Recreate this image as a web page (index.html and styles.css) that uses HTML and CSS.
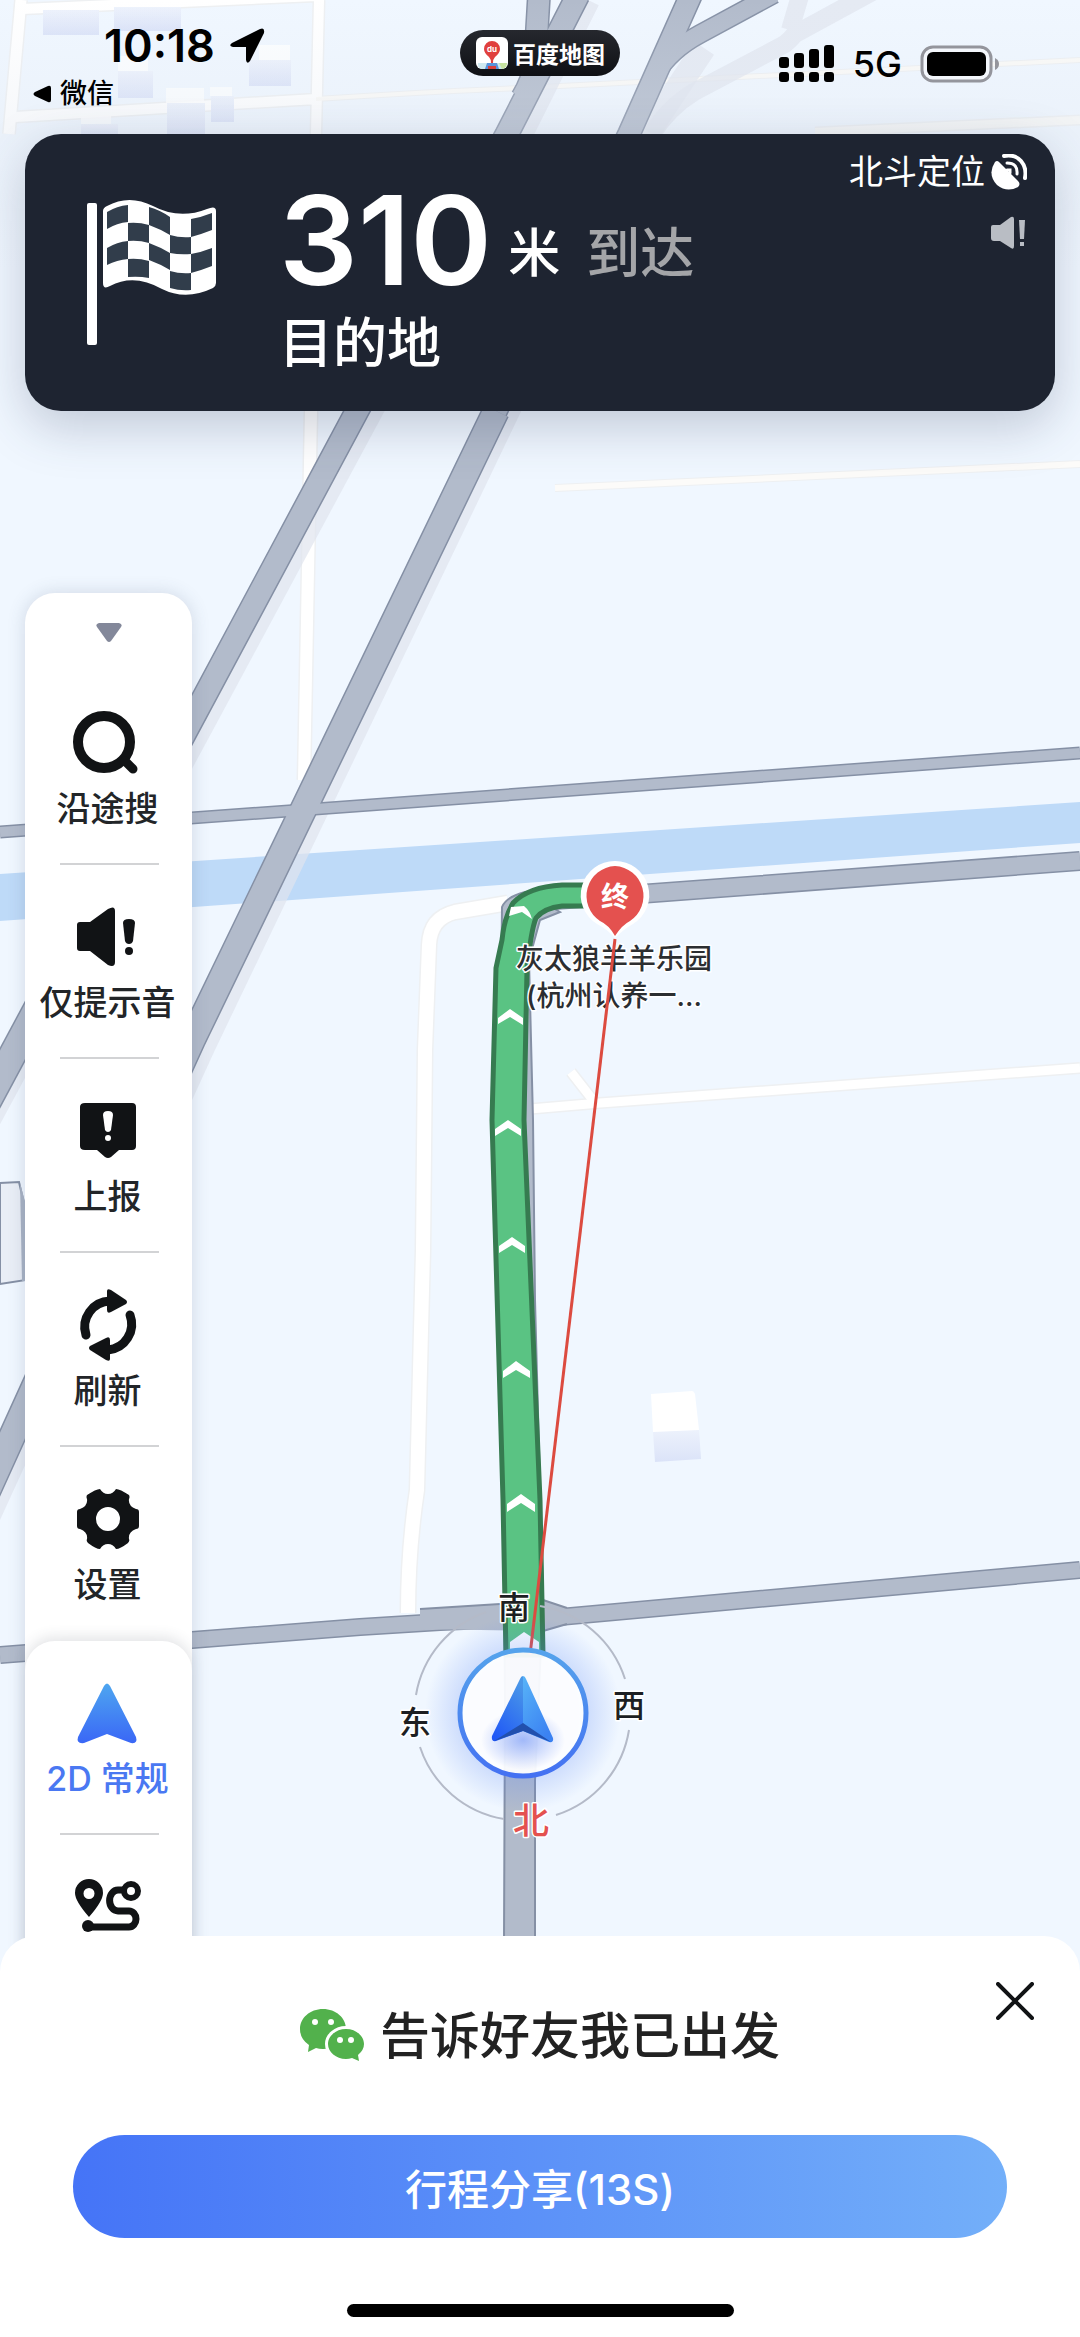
FILE: index.html
```html
<!DOCTYPE html>
<html lang="zh-CN">
<head>
    <meta charset="UTF-8">
    <meta name="viewport" content="width=device-width, initial-scale=1.0">
    <title>百度地图</title>
    <link rel="stylesheet" href="styles.css">
</head>
<body>
    <div class="screen">
        <svg class="map" viewBox="0 0 1080 2337" preserveAspectRatio="xMidYMin slice">
            <defs>
                <linearGradient id="haze" x1="0" y1="0" x2="0" y2="1">
                    <stop offset="0" stop-color="#dfe6f0" stop-opacity="0"/>
                    <stop offset="0.5" stop-color="#dfe6f0" stop-opacity="0.3"/>
                    <stop offset="1" stop-color="#dfe6f0" stop-opacity="0"/>
                </linearGradient>
                <linearGradient id="wall" x1="0" y1="0" x2="0" y2="1">
                    <stop offset="0" stop-color="#edf2fc"/>
                    <stop offset="1" stop-color="#dbe3f8"/>
                </linearGradient>
                <linearGradient id="ring" x1="0" y1="0" x2="0" y2="1">
                    <stop offset="0" stop-color="#55a3ec"/>
                    <stop offset="1" stop-color="#4471f2"/>
                </linearGradient>
                <linearGradient id="arrow-left" x1="0.7" y1="0" x2="0.2" y2="1">
                    <stop offset="0" stop-color="#4a97e8"/>
                    <stop offset="1" stop-color="#1f57f6"/>
                </linearGradient>
                <linearGradient id="arrow-right" x1="0" y1="0" x2="0.6" y2="1">
                    <stop offset="0" stop-color="#58b4f8"/>
                    <stop offset="1" stop-color="#3b82f2"/>
                </linearGradient>
                <radialGradient id="glow">
                    <stop offset="0.55" stop-color="#5b86f5" stop-opacity="0.3"/>
                    <stop offset="1" stop-color="#5b86f5" stop-opacity="0"/>
                </radialGradient>
                <radialGradient id="arrow-glow">
                    <stop offset="0" stop-color="#4a78f5" stop-opacity="0.5"/>
                    <stop offset="1" stop-color="#4a78f5" stop-opacity="0"/>
                </radialGradient>
            </defs>

            <rect width="1080" height="2337" fill="#f0f7ff"/>

            <!-- small white streets -->
            <g fill="none" stroke="#eef0f2" stroke-linejoin="round">
                <path d="M21 0L9 134" stroke-width="14"/>
                <path d="M22 9L316 -4M15 117L316 99M319 0L316 134" stroke-width="13"/>
                <path d="M316 99Q420 92 520 88L1080 60" stroke-width="6"/>
                <path d="M815 132L1080 120" stroke-width="11"/>
                <path d="M311 411L304 780" stroke-width="15"/>
                <path d="M555 488L1080 464" stroke-width="8"/>
                <path d="M508 903L455 912Q430 918 429 945L425 1050L423 1250L417 1490Q408 1550 408 1613" stroke-width="17"/>
                <path d="M530 1109L600 1103L1080 1068M571 1072L596 1104" stroke-width="12"/>
            </g>
            <g fill="none" stroke="#ffffff" stroke-linejoin="round">
                <path d="M21 0L9 134" stroke-width="11"/>
                <path d="M22 9L316 -4M15 117L316 99M319 0L316 134" stroke-width="10"/>
                <path d="M316 99Q420 92 520 88L1080 60" stroke-width="4" stroke="#fbfaf7"/>
                <path d="M815 132L1080 120" stroke-width="8" stroke="#f9f9f7"/>
                <path d="M311 411L304 780" stroke-width="12"/>
                <path d="M555 488L1080 464" stroke-width="6" stroke="#fcfbf9"/>
                <path d="M508 903L455 912Q430 918 429 945L425 1050L423 1250L417 1490Q408 1550 408 1613" stroke-width="14"/>
                <path d="M530 1109L600 1103L1080 1068M571 1072L596 1104" stroke-width="9"/>
            </g>

            <!-- buildings -->
            <g fill="url(#wall)">
                <rect x="43" y="10" width="56" height="25"/>
                <rect x="114" y="7" width="67" height="24"/>
                <rect x="118" y="71" width="35" height="27"/>
                <rect x="249" y="60" width="42" height="26"/>
                <rect x="167" y="103" width="38" height="31"/>
                <rect x="211" y="96" width="23" height="26"/>
                <rect x="81" y="124" width="37" height="12"/>
                <path d="M653 1431L699 1429L701 1459L655 1462Z"/>
            </g>
            <g fill="#ffffff" fill-opacity="0.8">
                <rect x="118" y="56" width="30" height="15"/>
                <rect x="259" y="45" width="31" height="15"/>
                <rect x="166" y="88" width="38" height="15"/>
                <rect x="210" y="87" width="22" height="9"/>
                <rect x="81" y="116" width="30" height="8"/>
                <path d="M651 1394L692 1391Q694 1391 695 1394L699 1430L653 1432Z" fill-opacity="1"/>
            </g>

            <!-- river -->
            <path d="M0 874L1080 802V843L0 921Z" fill="#bedaf8"/>

            <!-- road shadows -->
            <g fill="none" stroke="#dfe4ee" stroke-opacity="0.7">
                <path d="M588 0L518 140L371 411L202 725L-20 1136" stroke-width="24"/>
                <path d="M704 48L643 140L508 411L204 1045L-20 1535" stroke-width="24"/>
                <path d="M876 -10L795 34Q790 40 785 44L694 92Q668 108 652 134M800 -4L790 30" stroke-width="18"/>
            </g>

            <!-- main roads -->
            <g fill="none" stroke="#8590a5">
                <path d="M0 832L1080 753" stroke-width="13"/>
                <path d="M540 901L640 894L1080 861" stroke-width="20"/>
                <path d="M0 1655L192 1640L360 1627L440 1622L560 1617L1080 1570" stroke-width="18"/>
                <path d="M539 -5L535 62Q533 80 522 98" stroke-width="24"/>
                <path d="M578 -5L507 134L357 411L172 757" stroke-width="25"/>
                <path d="M172 757L-30 1134" stroke-width="29"/>
                <path d="M774 -6L700 34Q670 50 655 75" stroke-width="20"/>
                <path d="M691 -5L629 134L496 411" stroke-width="24"/>
                <path d="M496 411L192 1040L-30 1529" stroke-width="28"/>
            </g>
            <g fill="none" stroke="#b2bbcb">
                <path d="M0 832L1080 753" stroke-width="10"/>
                <path d="M540 901L640 894L1080 861" stroke-width="17"/>
                <path d="M0 1655L192 1640L360 1627L440 1622L560 1617L1080 1570" stroke-width="15"/>
                <path d="M539 -5L535 62Q533 80 522 98" stroke-width="21"/>
                <path d="M578 -5L507 134L357 411L172 757" stroke-width="22"/>
                <path d="M172 757L-30 1134" stroke-width="26"/>
                <path d="M774 -6L700 34Q670 50 655 75" stroke-width="17"/>
                <path d="M691 -5L629 134L496 411" stroke-width="21"/>
                <path d="M496 411L192 1040L-30 1529" stroke-width="25"/>
            </g>
            <path d="M420 1609L500 1604L543 1600L567 1608V1624L543 1631L420 1629Z" fill="#b2bbcb"/>
            <path d="M420 1609L500 1604M543 1600L567 1608M567 1624L543 1631" fill="none" stroke="#8590a5" stroke-width="2"/>
            <path d="M502 907Q506 897 525 892L560 912L540 920L529 960L533 1120L535 1300L543 1600L535 1780V1940H504L505 1700L500 1100Z" fill="#b2bbcb" stroke="#8590a5" stroke-width="2"/>

            <!-- overpass -->
            <path d="M0 1183L19 1182Q23 1200 26 1210V1280L0 1284Z" fill="#e9eef6" stroke="#8590a5" stroke-width="2"/>
            <path d="M20 1183L26 1205V1281L22 1281Z" fill="#a9b3c5"/>

            <rect width="1080" height="268" fill="url(#haze)"/>

            <!-- route -->
            <path d="M600 885H562Q528 887 513 903Q504 918 502 940L496 968L492 1120L503 1500L506 1655H543L540 1500L524 1120L527 970Q531 930 536 918Q544 908 562 906H600Z" fill="#5ac383" stroke="#367b50" stroke-width="5" stroke-linejoin="round"/>
            <g fill="#ffffff">
                <path d="M511 907L524 906Q530 911 532 919L522 912L509 916Z"/>
                <path d="M510 1009L523 1018V1025L510 1017L498 1024V1018Z"/>
                <path d="M508 1120L521 1129V1136L508 1128L495 1136V1129Z"/>
                <path d="M512 1237L525 1246V1253L512 1245L499 1253V1246Z"/>
                <path d="M516 1361L530 1371V1378L516 1370L503 1378V1371Z"/>
                <path d="M521 1494L535 1504V1512L521 1503L507 1512V1504Z"/>
                <path d="M524 1632L539 1642V1650H510V1642Z"/>
            </g>

            <!-- place label -->
            <g class="place-label">
                <text x="614" y="969">灰太狼羊羊乐园</text>
                <text x="614" y="1006">(杭州认养一...</text>
            </g>

            <!-- destination pin -->
            <path d="M615 861A34 34 0 0 1 633 924Q624 929 615 938Q607 929 597 924A34 34 0 0 1 615 861Z" fill="#ffffff"/>
            <path d="M615 866A30 30 0 0 1 630 921Q622 925 615 936Q609 925 600 921A30 30 0 0 1 615 866Z" fill="#e4514f"/>
            <text class="pin-label" x="615" y="907">终</text>
            <path d="M615 939L530 1655" stroke="#dc4b40" stroke-width="3"/>

            <!-- compass -->
            <g fill="none" stroke="#b4bac8" stroke-width="2">
                <path d="M416 1695A107 107 0 0 1 486 1612M540 1606A107 107 0 0 1 625 1679"/>
                <path d="M420 1747A107 107 0 0 0 504 1819M629 1730A107 107 0 0 1 556 1815"/>
            </g>
            <circle cx="523" cy="1713" r="98" fill="url(#glow)"/>
            <circle cx="523" cy="1713" r="63" fill="#ffffff" fill-opacity="0.93"/>
            <ellipse cx="523" cy="1740" rx="42" ry="30" fill="url(#arrow-glow)"/>
            <circle cx="523" cy="1713" r="63" fill="none" stroke="url(#ring)" stroke-width="5"/>
            <path d="M523 1676Q521 1676 520 1679L492 1736Q491 1742 496 1741L523 1731Z" fill="url(#arrow-left)"/>
            <path d="M523 1676Q525 1676 526 1679L553 1738Q554 1743 549 1742L523 1731Z" fill="url(#arrow-right)"/>
            <path d="M523 1723L494 1741L523 1731L551 1742Z" fill="#2250ad"/>
            <g class="compass-label">
                <text x="514" y="1619">南</text>
                <text x="415" y="1734">东</text>
                <text x="629" y="1717">西</text>
                <text class="north" x="531" y="1834">北</text>
            </g>
        </svg>

        <header class="status-bar">
            <div class="status-left">
                <div class="time">
                    <span>10:18</span>
                    <svg width="36" height="36" viewBox="0 0 36 36"><path d="M31 1Q36 -1 35 5L21 33Q18 37 17 32V19H4Q-1 18 3 15Z"/></svg>
                </div>
                <a class="back" href="#">
                    <svg width="20" height="20" viewBox="0 0 20 20"><path d="M16 2Q19 1 19 4V16Q19 19 16 18L3 12Q0 10 3 8Z"/></svg>
                    微信
                </a>
            </div>
            <div class="app-pill">
                <svg width="32" height="32" viewBox="0 0 32 32">
                    <rect width="32" height="32" rx="6" fill="#ffffff"/>
                    <path d="M2 26H30V28Q29 32 25 32H6Q2 31 2 28Z" fill="#cfe8ef"/>
                    <path d="M23 26H31Q31 31 26 32Z" fill="#c7e3a0"/>
                    <path d="M11 26H21L23 32H9Z" fill="#5a93dc"/>
                    <rect x="12" y="29" width="8" height="3" fill="#d9413f"/>
                    <path d="M16 4A8 8 0 0 1 24 12Q24 16 19 20Q17 22 17 26H15Q15 22 13 20Q8 16 8 12A8 8 0 0 1 16 4Z" fill="#e0403d"/>
                    <text class="pill-du" x="16" y="15">du</text>
                </svg>
                <span>百度地图</span>
            </div>
            <div class="status-right">
                <svg width="56" height="38" viewBox="0 0 56 38">
                    <rect x="0" y="12" width="10" height="11" rx="3"/>
                    <rect x="15" y="8" width="10" height="15" rx="3"/>
                    <rect x="30" y="4" width="10" height="19" rx="3"/>
                    <rect x="45" y="0" width="10" height="23" rx="3"/>
                    <rect x="0" y="27" width="10" height="10" rx="3"/>
                    <rect x="15" y="27" width="10" height="10" rx="3"/>
                    <rect x="30" y="27" width="10" height="10" rx="3"/>
                    <rect x="45" y="27" width="10" height="10" rx="3"/>
                </svg>
                <span class="network">5G</span>
                <svg width="80" height="38" viewBox="0 0 80 38">
                    <rect x="2" y="2" width="69" height="34" rx="11" fill="#f4f7fc" stroke="#94959c" stroke-width="3"/>
                    <rect x="7" y="7" width="59" height="24" rx="6"/>
                    <path d="M75 13Q79 15 79 19Q79 23 75 25Z" fill="#94959c"/>
                </svg>
            </div>
        </header>

        <section class="guide-card">
            <svg class="flag" width="116" height="144" viewBox="0 0 116 144">
                <rect x="0" y="0" width="10" height="142" rx="2" fill="#ffffff"/>
                <path d="M16 8Q16 5 20 3Q42 -9 66 3Q92 17 120 6Q129 2 129 8V80Q129 83 126 85Q99 98 75 86Q47 70 23 83Q16 87 16 80Z" fill="#ffffff"/>
                <g fill="#313d4b">
                    <path d="M20 9Q30 3 41 2V19Q30 20 20 26Z"/>
                    <path d="M41 20Q52 19 62 22V40Q52 37 41 38Z"/>
                    <path d="M62 4Q73 7 83 14V32Q73 26 62 22Z"/>
                    <path d="M83 32Q93 35 104 34V51Q93 52 83 50Z"/>
                    <path d="M104 16Q115 14 125 10V27Q115 31 104 34Z"/>
                    <path d="M20 45Q30 39 41 38V56Q30 57 20 62Z"/>
                    <path d="M41 56Q52 55 62 58V75Q52 73 41 74Z"/>
                    <path d="M62 40Q73 44 83 50V67Q73 61 62 57Z"/>
                    <path d="M83 68Q93 71 104 70V87Q93 88 83 85Z"/>
                    <path d="M104 51Q115 49 125 45V63Q115 67 104 70Z"/>
                </g>
            </svg>
            <div class="guide-text">
                <p class="distance"><strong>310</strong><span class="unit">米</span><span class="arrive">到达</span></p>
                <p class="target">目的地</p>
            </div>
            <div class="guide-state">
                <p class="gps">北斗定位
                    <svg width="36" height="36" viewBox="0 0 36 36">
                        <path d="M4 8Q6 6 8 8L27 27Q30 30 27 33Q16 39 6 31Q-4 20 4 8Z" fill="#ffffff"/>
                        <path d="M13 2Q24 0 30 7Q36 14 34 24" fill="none" stroke="#ffffff" stroke-width="4" stroke-linecap="round"/>
                        <path d="M16 9Q27 9 26 20M16 16L19 16V19" fill="none" stroke="#ffffff" stroke-width="3" stroke-linecap="round"/>
                    </svg>
                </p>
                <svg width="36" height="34" viewBox="0 0 36 34" fill="#b9bdc4">
                    <path d="M2 9H9L20 1Q23 0 23 3V30Q23 34 20 32L9 25H3Q0 25 0 22V11Q0 9 2 9Z"/>
                    <path d="M28 4H34L33 23H29Z"/>
                    <rect x="29" y="26" width="4" height="4"/>
                </svg>
            </div>
        </section>

        <main class="controls">
            <nav class="toolbar">
                <button class="collapse" aria-label="收起">
                    <svg width="26" height="20" viewBox="0 0 26 20"><path d="M3 0H23Q27 1 25 4L15 18Q13 20 11 18L1 4Q-1 1 3 0Z" fill="#83889a"/></svg>
                </button>
                <button class="tool">
                    <svg width="64" height="64" viewBox="2 0 64 64">
                        <circle cx="30" cy="31" r="26" fill="none" stroke="#111315" stroke-width="10"/>
                        <path d="M51 50L59 58" stroke="#111315" stroke-width="9" stroke-linecap="round"/>
                    </svg>
                    沿途搜
                </button>
                <button class="tool">
                    <svg width="64" height="64" viewBox="4 0 64 64" fill="#111315">
                        <path d="M8 17H18L36 4Q43 0 43 6V57Q43 63 36 60L18 46H8Q5 46 5 43V20Q5 17 8 17Z"/>
                        <path d="M51 18Q51 14 57 14Q63 14 63 18L61 36Q60 39 57 39Q54 39 53 36Z"/>
                        <circle cx="57" cy="46" r="4"/>
                    </svg>
                    仅提示音
                </button>
                <button class="tool">
                    <svg width="64" height="64" viewBox="0 0 64 64">
                        <path d="M9 4H56Q60 4 60 8V47Q60 51 56 51H43L35 58Q32 60 29 58L21 51H9Q4 51 4 47V8Q4 4 9 4Z" fill="#111315"/>
                        <path d="M27 16Q27 12 32 12Q37 12 37 16L35 31Q34 33 32 33Q30 33 29 31Z" fill="#ffffff"/>
                        <circle cx="32" cy="39" r="3" fill="#ffffff"/>
                    </svg>
                    上报
                </button>
                <button class="tool">
                    <svg class="tall" width="64" height="72" viewBox="0 0 64 72">
                        <path d="M10 46A26 26 0 0 1 34 12M54 26A26 26 0 0 1 32 61" fill="none" stroke="#111315" stroke-width="9" stroke-linecap="round"/>
                        <path d="M31 2Q31 -1 35 1L50 11Q52 13 50 15L35 23Q31 25 31 21Z" fill="#111315"/>
                        <path d="M34 70Q34 73 30 71L14 61Q12 59 14 57L30 49Q34 47 34 51Z" fill="#111315"/>
                    </svg>
                    刷新
                </button>
                <button class="tool">
                    <svg width="64" height="64" viewBox="0 0 64 64">
                        <path d="M24 2Q20 2 11 8Q10 10 11 12Q12 19 4 22Q1 22 1 25V39Q1 42 4 42Q12 45 11 52Q10 54 12 56Q20 62 24 62Q27 57 32 57Q37 57 40 62Q44 62 52 56Q54 54 53 52Q52 45 60 42Q63 42 63 39V25Q63 22 60 22Q52 19 53 12Q54 10 53 8Q44 2 40 2Q37 7 32 7Q27 7 24 2ZM32 20A12 12 0 0 1 32 44A12 12 0 0 1 32 20Z" fill="#111315" fill-rule="evenodd"/>
                    </svg>
                    设置
                </button>
                <div class="mode-panel">
                    <button class="tool active">
                        <svg width="64" height="64" viewBox="0 0 64 64">
                            <defs>
                                <linearGradient id="mode-arrow" x1="0" y1="0" x2="0" y2="1">
                                    <stop offset="0" stop-color="#4ea6f0"/>
                                    <stop offset="1" stop-color="#3a67f6"/>
                                </linearGradient>
                            </defs>
                            <path d="M28 5Q31 0 34 5L60 56Q62 63 55 62L31 53L8 62Q0 63 2 56Z" fill="url(#mode-arrow)"/>
                        </svg>
                        2D 常规
                    </button>
                    <button class="tool" aria-label="路线">
                        <svg width="68" height="64" viewBox="0 0 68 64" fill="none" stroke="#111315">
                            <path d="M15 4A14 14 0 0 1 29 18Q29 26 15 42Q1 26 1 18A14 14 0 0 1 15 4ZM15 13A5 5 0 0 0 15 24A5 5 0 0 0 15 13Z" fill="#111315" fill-rule="evenodd" stroke="none"/>
                            <circle cx="57" cy="16" r="7" stroke-width="6"/>
                            <path d="M50 15H44A8 10 0 0 0 44 36H55A7 8 0 0 1 55 52H14" stroke-width="7"/>
                            <circle cx="14" cy="51" r="6" fill="#111315" stroke="none"/>
                        </svg>
                    </button>
                </div>
            </nav>
        </main>

        <section class="share-sheet">
            <button class="close" aria-label="关闭">
                <svg width="38" height="38" viewBox="0 0 38 38"><path d="M2 2L36 36M36 2L2 36" stroke="#111315" stroke-width="4" stroke-linecap="round"/></svg>
            </button>
            <h1>
                <svg width="64" height="54" viewBox="0 0 64 54">
                    <path d="M23 0C36 0 46 9 46 20C46 31 36 40 23 40Q19 40 16 39L8 43L9 36Q0 30 0 20C0 9 10 0 23 0Z" fill="#52b14c"/>
                    <circle cx="15" cy="13" r="3" fill="#ffffff"/>
                    <circle cx="31" cy="13" r="3" fill="#ffffff"/>
                    <path d="M46 20C56 20 64 27 64 35Q64 41 58 46L59 52L52 49Q49 50 46 50C36 50 28 43 28 35C28 27 36 20 46 20Z" fill="#52b14c" stroke="#ffffff" stroke-width="6" paint-order="stroke"/>
                    <circle cx="40" cy="31" r="3" fill="#ffffff"/>
                    <circle cx="51" cy="31" r="3" fill="#ffffff"/>
                </svg>
                告诉好友我已出发
            </h1>
            <button class="share">行程分享(13S)</button>
            <div class="home-indicator"></div>
        </section>
    </div>
</body>
</html>
```

FILE: styles.css
```css
* {
    margin: 0;
    padding: 0;
    box-sizing: border-box;
}

body {
    font-family: Inter, "Noto Sans CJK SC", sans-serif;
    font-weight: 500;
    color: #222528;
    background-color: #f0f7ff;
}

button {
    border: none;
    background: none;
    font: inherit;
    color: inherit;
    cursor: pointer;
}

svg {
    display: block;
    flex-shrink: 0;
}

.screen {
    position: relative;
    height: 100vh;
    display: flex;
    flex-direction: column;
    overflow: hidden;
}

/* map */
.map {
    position: absolute;
    top: 0;
    left: 0;
    width: 100%;
    height: 100%;
}

.place-label {
    font-size: 28px;
    text-anchor: middle;
    fill: #2c2e31;
    stroke: #ffffff;
    stroke-width: 3px;
    stroke-linejoin: round;
    paint-order: stroke;
}

.pin-label {
    font-size: 28px;
    font-weight: 700;
    text-anchor: middle;
    fill: #ffffff;
}

.compass-label {
    font-size: 32px;
    text-anchor: middle;
    fill: #1d1f22;
    stroke: #ffffff;
    stroke-width: 3px;
    stroke-linejoin: round;
    paint-order: stroke;
}

.compass-label .north {
    font-size: 36px;
    fill: #e4514f;
}

/* status bar */
.status-bar {
    position: relative;
    display: grid;
    grid-template-columns: 1fr auto 1fr;
    align-items: start;
    height: 134px;
    padding: 18px 80px 0 32px;
    color: #000000;
}

.time {
    display: flex;
    align-items: center;
    gap: 14px;
    padding-left: 72px;
    font-size: 45px;
    font-weight: 600;
    line-height: 56px;
}

.back {
    display: flex;
    align-items: center;
    gap: 8px;
    font-size: 27px;
    line-height: 40px;
    color: #000000;
    text-decoration: none;
}

.app-pill {
    display: flex;
    align-items: center;
    gap: 5px;
    height: 46px;
    margin-top: 12px;
    margin-left: 48px;
    padding: 0 15px 0 16px;
    border-radius: 23px;
    background: linear-gradient(#26282e, #0f1014);
    color: #ffffff;
    font-size: 23px;
    font-weight: 700;
}

.pill-du {
    font-size: 8px;
    font-weight: 700;
    text-anchor: middle;
    fill: #ffffff;
}

.status-right {
    display: flex;
    align-items: center;
    justify-content: flex-end;
    gap: 18px;
    margin-top: 26px;
}

.network {
    font-size: 36px;
    line-height: 40px;
}

/* guide card */
.guide-card {
    position: relative;
    display: flex;
    min-height: 277px;
    margin: 0 25px;
    padding: 14px 28px 8px 62px;
    border-radius: 36px;
    background: #1e2431;
    color: #ffffff;
    box-shadow: 0 16px 50px rgba(50, 65, 95, 0.25);
}

.flag {
    margin-top: 55px;
    overflow: visible;
}

.guide-text {
    margin-left: 76px;
    padding-top: 32px;
}

.distance {
    display: flex;
    align-items: flex-end;
    line-height: 92px;
}

.distance strong {
    font-size: 124px;
    font-weight: 600;
    line-height: 120px;
}

.unit {
    margin-left: 16px;
    font-size: 52px;
}

.arrive {
    margin-left: 26px;
    font-size: 54px;
    color: #a4a5a8;
}

.target {
    font-size: 54px;
    line-height: 88px;
}

.guide-state {
    display: flex;
    flex-direction: column;
    align-items: flex-end;
    gap: 20px;
    margin-left: auto;
}

.gps {
    display: flex;
    align-items: center;
    gap: 6px;
    font-size: 34px;
    font-weight: 400;
    line-height: 48px;
}

/* toolbar */
.controls {
    position: relative;
    flex: 1;
    min-height: 0;
    padding: 182px 25px 0;
}

.toolbar {
    width: 167px;
    border-radius: 30px 30px 0 0;
    background: #ffffff;
    box-shadow: 0 0 18px rgba(60, 75, 105, 0.18);
}

.collapse {
    display: flex;
    justify-content: center;
    width: 100%;
    height: 78px;
    padding-top: 30px;
}

.tool {
    position: relative;
    display: flex;
    flex-direction: column;
    align-items: center;
    gap: 14px;
    width: 100%;
    height: 194px;
    padding: 40px 2px 0 0;
    font-size: 34px;
    line-height: 40px;
    white-space: nowrap;
}

.tool svg {
    overflow: visible;
}

.tool .tall {
    margin: -4px 0;
}

.tool::after {
    content: "";
    position: absolute;
    bottom: 0;
    left: 35px;
    right: 33px;
    height: 2px;
    background: #d2d3d5;
}

.tool:nth-last-child(2):not(.active)::after {
    display: none;
}

.tool.active {
    color: #4a78f2;
}

.mode-panel {
    border-radius: 30px 30px 0 0;
    background: #ffffff;
    box-shadow: 0 -4px 14px rgba(60, 65, 80, 0.14);
}

/* share sheet */
.share-sheet {
    position: relative;
    display: flex;
    flex-direction: column;
    align-items: center;
    padding: 66px 73px 20px;
    border-radius: 36px 36px 0 0;
    background: #ffffff;
}

.close {
    position: absolute;
    top: 46px;
    right: 46px;
}

.share-sheet h1 {
    display: flex;
    align-items: center;
    gap: 16px;
    font-size: 50px;
    font-weight: 500;
    line-height: 68px;
    color: #222222;
}

.share {
    width: 100%;
    height: 103px;
    margin-top: 65px;
    border-radius: 52px;
    background: linear-gradient(90deg, #4574f7, #73aff9);
    color: #ffffff;
    font-size: 42px;
}

.home-indicator {
    width: 387px;
    height: 13px;
    margin-top: 66px;
    border-radius: 7px;
    background: #000000;
}
```
